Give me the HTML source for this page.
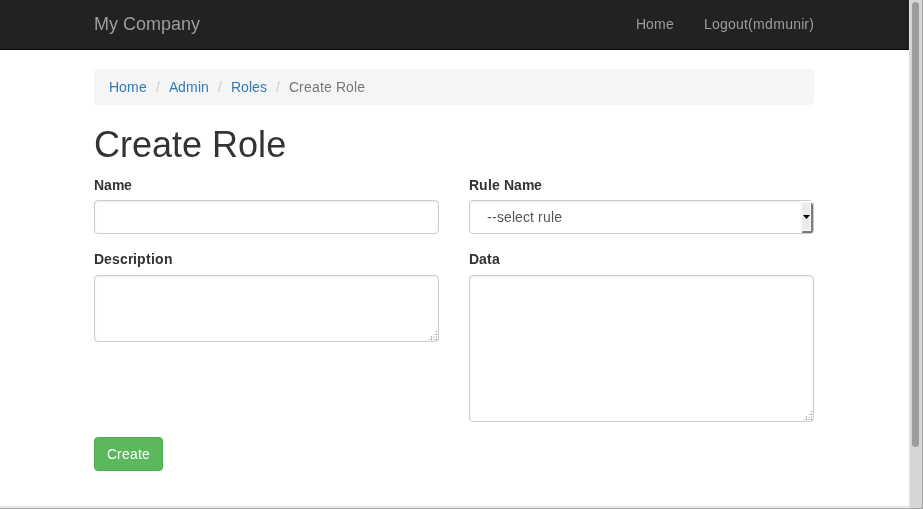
<!DOCTYPE html>
<html>
<head>
<meta charset="utf-8">
<style>
*{box-sizing:border-box;margin:0;padding:0}
html,body{width:923px;height:509px;overflow:hidden;background:#a0a0a0}
body{font-family:"Liberation Sans",sans-serif;font-size:14px;line-height:20px;color:#333;position:relative;font-kerning:none}
.page{position:absolute;left:0;top:0;width:909px;height:508px;background:#fff;overflow:hidden}
.abs{position:absolute;white-space:nowrap;will-change:transform}
.navbar{left:0;top:0;width:909px;height:50px;background:#222;border-bottom:1px solid #080808}
.brand{left:94px;top:14px;font-size:18px;line-height:20px;color:#9d9d9d}
.nav{top:14px;font-size:14px;line-height:20px;color:#9d9d9d}
.bc{left:94px;top:69px;width:720px;height:36px;background:#f5f5f5;border-radius:4px}
.link{color:#337ab7}
.sep{color:#ccc}
.act{color:#777}
.h1{font-size:36px;line-height:40px;color:#333}
.lbl{font-weight:bold;font-size:14px;line-height:20px;color:#333}
.fc{position:absolute;border:1px solid #ccc;border-radius:4px;background:#fff;box-shadow:inset 0 1px 2px rgba(0,0,0,.075)}
.btn{position:absolute;left:94px;top:437px;width:69px;height:34px;background:#5cb85c;border:1px solid #4cae4c;border-radius:4px}
.btxt{color:#fff;font-size:14px;line-height:20px}
.sb{left:909px;top:0;width:13px;height:508px;background:#d6d6d6;border-left:1px solid #e2e2e2}
.thumb{left:912px;top:2px;width:7px;height:445px;background:#9c9c9c;border-radius:3.5px}
.footer{left:0;top:506px;width:909px;height:2px;background:#f5f5f5;border-top:1px solid #ddd}
</style>
</head>
<body>
<div class="page">
<div class="abs navbar"></div>
<div class="abs brand"><span style="letter-spacing:0.006px">M</span><span style="letter-spacing:0.000px">y</span><span style="letter-spacing:-0.001px">&nbsp;</span><span style="letter-spacing:0.001px">C</span><span style="letter-spacing:-0.011px">o</span><span style="letter-spacing:0.006px">m</span><span style="letter-spacing:-0.011px">p</span><span style="letter-spacing:-0.011px">a</span><span style="letter-spacing:-0.011px">n</span><span style="letter-spacing:0.000px">y</span></div>
<div class="abs nav" style="left:636px"><span style="letter-spacing:-0.110px">H</span><span style="letter-spacing:0.214px">o</span><span style="letter-spacing:0.338px">m</span><span style="letter-spacing:0.214px">e</span></div>
<div class="abs nav" style="left:704px"><span style="letter-spacing:0.214px">L</span><span style="letter-spacing:0.214px">o</span><span style="letter-spacing:0.214px">g</span><span style="letter-spacing:0.214px">o</span><span style="letter-spacing:0.214px">u</span><span style="letter-spacing:0.110px">t</span><span style="letter-spacing:0.338px">(</span><span style="letter-spacing:0.338px">m</span><span style="letter-spacing:0.214px">d</span><span style="letter-spacing:0.338px">m</span><span style="letter-spacing:0.214px">u</span><span style="letter-spacing:0.214px">n</span><span style="letter-spacing:-0.110px">i</span><span style="letter-spacing:0.338px">r</span><span style="letter-spacing:0.338px">)</span></div>
<div class="abs bc"></div>
<div class="abs link" style="left:109px;top:77px"><span style="letter-spacing:-0.110px">H</span><span style="letter-spacing:0.214px">o</span><span style="letter-spacing:0.338px">m</span><span style="letter-spacing:0.214px">e</span></div>
<div class="abs sep" style="left:156px;top:77px"><span style="letter-spacing:0.110px">/</span></div>
<div class="abs link" style="left:169px;top:77px"><span style="letter-spacing:-0.338px">A</span><span style="letter-spacing:0.214px">d</span><span style="letter-spacing:0.338px">m</span><span style="letter-spacing:-0.110px">i</span><span style="letter-spacing:0.214px">n</span></div>
<div class="abs sep" style="left:218px;top:77px"><span style="letter-spacing:0.110px">/</span></div>
<div class="abs link" style="left:231px;top:77px"><span style="letter-spacing:-0.110px">R</span><span style="letter-spacing:0.214px">o</span><span style="letter-spacing:-0.110px">l</span><span style="letter-spacing:0.214px">e</span><span style="letter-spacing:0.000px">s</span></div>
<div class="abs sep" style="left:276px;top:77px"><span style="letter-spacing:0.110px">/</span></div>
<div class="abs act" style="left:289px;top:77px"><span style="letter-spacing:-0.110px">C</span><span style="letter-spacing:0.338px">r</span><span style="letter-spacing:0.214px">e</span><span style="letter-spacing:0.214px">a</span><span style="letter-spacing:0.110px">t</span><span style="letter-spacing:0.214px">e</span><span style="letter-spacing:0.110px">&nbsp;</span><span style="letter-spacing:-0.110px">R</span><span style="letter-spacing:0.214px">o</span><span style="letter-spacing:-0.110px">l</span><span style="letter-spacing:0.214px">e</span></div>
<div class="abs h1" style="left:94px;top:125px"><span style="letter-spacing:0.002px">C</span><span style="letter-spacing:0.012px">r</span><span style="letter-spacing:-0.021px">e</span><span style="letter-spacing:-0.021px">a</span><span style="letter-spacing:-0.002px">t</span><span style="letter-spacing:-0.021px">e</span><span style="letter-spacing:-0.002px">&nbsp;</span><span style="letter-spacing:0.002px">R</span><span style="letter-spacing:-0.021px">o</span><span style="letter-spacing:0.002px">l</span><span style="letter-spacing:-0.021px">e</span></div>
<div class="abs lbl" style="left:94px;top:175px"><span style="letter-spacing:-0.110px">N</span><span style="letter-spacing:0.214px">a</span><span style="letter-spacing:-0.448px">m</span><span style="letter-spacing:0.214px">e</span></div>
<div class="fc" style="left:94px;top:200px;width:345px;height:34px"></div>
<div class="abs lbl" style="left:469px;top:175px"><span style="letter-spacing:-0.110px">R</span><span style="letter-spacing:0.448px">u</span><span style="letter-spacing:0.110px">l</span><span style="letter-spacing:0.214px">e</span><span style="letter-spacing:0.110px">&nbsp;</span><span style="letter-spacing:-0.110px">N</span><span style="letter-spacing:0.214px">a</span><span style="letter-spacing:-0.448px">m</span><span style="letter-spacing:0.214px">e</span></div>
<div class="fc" style="left:469px;top:200px;width:345px;height:34px"></div>
<div class="abs" style="left:487px;top:207px;color:#555"><span style="letter-spacing:0.338px">-</span><span style="letter-spacing:0.338px">-</span><span style="letter-spacing:0.000px">s</span><span style="letter-spacing:0.214px">e</span><span style="letter-spacing:-0.110px">l</span><span style="letter-spacing:0.214px">e</span><span style="letter-spacing:0.000px">c</span><span style="letter-spacing:0.110px">t</span><span style="letter-spacing:0.110px">&nbsp;</span><span style="letter-spacing:0.338px">r</span><span style="letter-spacing:0.214px">u</span><span style="letter-spacing:-0.110px">l</span><span style="letter-spacing:0.214px">e</span></div>
<svg class="abs" style="left:795px;top:198px" width="22" height="40" viewBox="795 198 22 40">
<rect x="800" y="201" width="13" height="32" fill="#fff"/>
<rect x="800" y="202" width="11" height="29" fill="#f9f9f9"/>
<rect x="802" y="203" width="8" height="27" fill="#ebebeb"/>
<path d="M811 203.5 Q811 202.5 811.8 203 L813 204.5 L813 231.5 Q813 233 811.5 233 L802.5 233 Q801.2 233 802 232 L802.8 231 L811 231 Z" fill="#7c7c7c"/>
<path d="M803 215 L810 215 L806.5 219 Z" fill="#000"/>
</svg>
<div class="abs lbl" style="left:94px;top:249px"><span style="letter-spacing:-0.110px">D</span><span style="letter-spacing:0.214px">e</span><span style="letter-spacing:0.214px">s</span><span style="letter-spacing:0.214px">c</span><span style="letter-spacing:-0.448px">r</span><span style="letter-spacing:0.110px">i</span><span style="letter-spacing:0.448px">p</span><span style="letter-spacing:0.338px">t</span><span style="letter-spacing:0.110px">i</span><span style="letter-spacing:0.448px">o</span><span style="letter-spacing:0.448px">n</span></div>
<div class="fc" style="left:94px;top:275px;width:345px;height:67px"></div>
<div class="abs lbl" style="left:469px;top:249px"><span style="letter-spacing:-0.110px">D</span><span style="letter-spacing:0.214px">a</span><span style="letter-spacing:0.338px">t</span><span style="letter-spacing:0.214px">a</span></div>
<div class="fc" style="left:469px;top:275px;width:345px;height:147px"></div>
<svg class="abs" style="left:425px;top:328px" width="14" height="14" viewBox="0 0 14 14"><rect x="10.8" y="2.9" width="1.3" height="1.3" fill="#aaa"/><rect x="8.3" y="5.8" width="1.3" height="1.3" fill="#ccc"/><rect x="10.8" y="5.8" width="1.3" height="1.3" fill="#888"/><rect x="5.8" y="8.3" width="1.3" height="1.3" fill="#999"/><rect x="8.3" y="8.3" width="1.3" height="1.3" fill="#ccc"/><rect x="10.8" y="8.3" width="1.3" height="1.3" fill="#aaa"/><rect x="3.4" y="10.8" width="1.3" height="1.3" fill="#ccc"/><rect x="5.8" y="10.8" width="1.3" height="1.3" fill="#888"/><rect x="8.3" y="10.8" width="1.3" height="1.3" fill="#bbb"/><rect x="10.8" y="10.8" width="1.3" height="1.3" fill="#999"/></svg>
<svg class="abs" style="left:800px;top:408px" width="14" height="14" viewBox="0 0 14 14"><rect x="10.8" y="2.9" width="1.3" height="1.3" fill="#aaa"/><rect x="8.3" y="5.8" width="1.3" height="1.3" fill="#ccc"/><rect x="10.8" y="5.8" width="1.3" height="1.3" fill="#888"/><rect x="5.8" y="8.3" width="1.3" height="1.3" fill="#999"/><rect x="8.3" y="8.3" width="1.3" height="1.3" fill="#ccc"/><rect x="10.8" y="8.3" width="1.3" height="1.3" fill="#aaa"/><rect x="3.4" y="10.8" width="1.3" height="1.3" fill="#ccc"/><rect x="5.8" y="10.8" width="1.3" height="1.3" fill="#888"/><rect x="8.3" y="10.8" width="1.3" height="1.3" fill="#bbb"/><rect x="10.8" y="10.8" width="1.3" height="1.3" fill="#999"/></svg>
<div class="btn"></div>
<div class="abs btxt" style="left:107px;top:444px"><span style="letter-spacing:-0.110px">C</span><span style="letter-spacing:0.338px">r</span><span style="letter-spacing:0.214px">e</span><span style="letter-spacing:0.214px">a</span><span style="letter-spacing:0.110px">t</span><span style="letter-spacing:0.214px">e</span></div>
<div class="abs footer"></div>
</div>
<div class="abs sb"></div>
<div class="abs thumb"></div>
</body>
</html>
